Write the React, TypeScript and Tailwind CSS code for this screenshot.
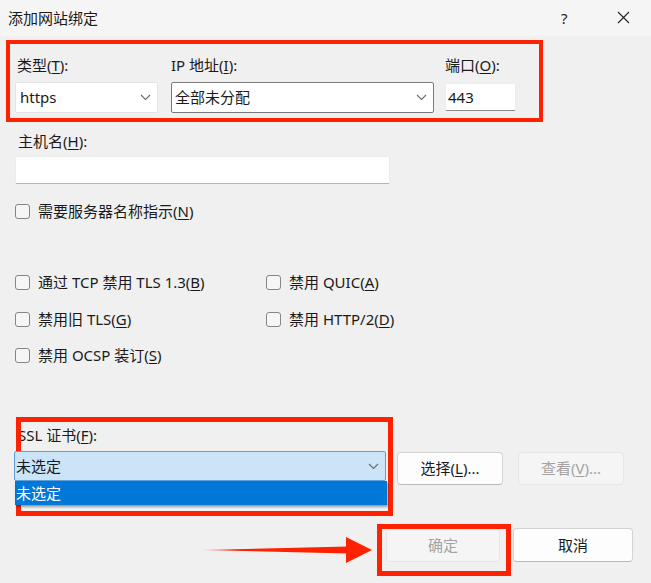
import React from "react";

const FONT = { fontFamily: '"Segoe UI", "Noto Sans", "Noto Sans CJK SC", sans-serif' };

function Chevron({ color = "#6b6b6b" }: { color?: string }) {
  return (
    <svg width="11" height="7" viewBox="0 0 11 7" fill="none">
      <polyline points="1,1 5.5,5.5 10,1" stroke={color} strokeWidth="1.1" />
    </svg>
  );
}

function Key({ k }: { k: string }) {
  return <u className="underline-offset-2 decoration-1">{k}</u>;
}

function Check({ children }: { children: React.ReactNode }) {
  return (
    <div className="flex items-center h-[20px] gap-[8px]">
      <div className="w-[15px] h-[15px] rounded-[3px] border border-[#858585] bg-[#f6f6f6] shrink-0" />
      <span className="text-[15px] text-[#1a1a1a] leading-[20px] whitespace-nowrap">{children}</span>
    </div>
  );
}

export default function App() {
  return (
    <div className="relative w-[651px] h-[583px] bg-[#f0f0f0] overflow-hidden text-[#1a1a1a]" style={FONT}>
      {/* Title bar */}
      <div className="h-[36px] bg-[#f5f5f5] flex items-center pl-[8px] relative">
        <span className="text-[15px] text-[#1a1a1a]">添加网站绑定</span>
        <span className="absolute left-[561px] top-[7px] text-[15px] text-[#222]">?</span>
        <svg className="absolute left-[617px] top-[11px]" width="13" height="13" viewBox="0 0 13 13">
          <path d="M1 1 L12 12 M12 1 L1 12" stroke="#222" strokeWidth="1.1" />
        </svg>
      </div>

      <div className="pl-[15px]">
        {/* Top row */}
        <div className="flex items-start mt-[19px]">
          <div className="w-[143px]">
            <div className="h-[20px] leading-[20px] text-[15px] pl-[2px]">类型(<Key k="T" />):</div>
            <div className="mt-[7px] h-[31px] bg-white border border-[#e3e3e3] rounded-[2px] flex items-center justify-between pl-[4px] pr-[6px]">
              <span className="text-[15px]">https</span>
              <Chevron />
            </div>
          </div>
          <div className="w-[263px] ml-[13px]">
            <div className="h-[20px] leading-[20px] text-[15px]">IP 地址(<Key k="I" />):</div>
            <div className="mt-[7px] h-[31px] bg-white border border-[#7a7a7a] rounded-[2px] flex items-center justify-between pl-[3px] pr-[6px]">
              <span className="text-[15px]">全部未分配</span>
              <Chevron />
            </div>
          </div>
          <div className="w-[71px] ml-[11px]">
            <div className="h-[20px] leading-[20px] text-[15px]">端口(<Key k="O" />):</div>
            <div className="mt-[8px] h-[28px] bg-white border border-[#ececec] border-b-[#8a8a8a] rounded-[2px] flex items-center pl-[2px]">
              <span className="text-[15px]">443</span>
            </div>
          </div>
        </div>

        {/* Host name */}
        <div className="mt-[18px] h-[20px] leading-[20px] text-[15px] pl-[3px]">主机名(<Key k="H" />):</div>
        <div className="mt-[5px] w-[375px] h-[28px] bg-white border border-[#ececec] border-b-[#b5b5b5] rounded-[2px]" />

        <div className="mt-[17px]">
          <Check>需要服务器名称指示(<Key k="N" />)</Check>
        </div>

        {/* Options grid */}
        <div className="mt-[51px] grid grid-cols-[251px_1fr] gap-y-[17px]">
          <Check>通过 TCP 禁用 TLS 1.3(<Key k="B" />)</Check>
          <Check>禁用 QUIC(<Key k="A" />)</Check>
          <Check>禁用旧 TLS(<Key k="G" />)</Check>
          <Check>禁用 HTTP/2(<Key k="D" />)</Check>
          <div className="-mt-[1px]">
            <Check>禁用 OCSP 装订(<Key k="S" />)</Check>
          </div>
        </div>

        {/* SSL */}
        <div className="mt-[60px] h-[20px] leading-[20px] text-[15px] pl-[3px]">SSL 证书(<Key k="F" />):</div>
        <div className="mt-[6px] flex items-start">
          <div className="relative z-10 -ml-[1px] w-[372px]">
            <div className="h-[30px] bg-[#cce4f7] border border-[#5d9fdc] rounded-[2px] flex items-center justify-between pl-[1px] pr-[6px]">
              <span className="text-[15px]">未选定</span>
              <Chevron />
            </div>
            <div className="absolute left-[1px] right-[-1px] top-[30px] h-[24px] bg-[#0078d7] flex items-center pl-[1px] shadow-[1px_2px_2px_rgba(0,0,0,0.35)]">
              <span className="text-[15px] text-white">未选定</span>
            </div>
          </div>
          <button className="ml-[11px] mt-[1px] w-[106px] h-[33px] bg-[#fdfdfd] border border-[#d3d3d3] border-b-[#b9b9b9] rounded-[4px] text-[15px] text-[#1a1a1a]">
            选择(<Key k="L" />)...
          </button>
          <button className="ml-[15px] mt-[1px] w-[106px] h-[33px] bg-[#f5f5f5] border border-[#e6e6e6] rounded-[4px] text-[15px] text-[#a3a3a3]">
            查看(<Key k="V" />)...
          </button>
        </div>
      </div>

      {/* Bottom buttons */}
      <div className="mt-[43px] flex items-center justify-end pr-[18px] gap-[13px]">
        <button className="w-[114px] h-[33px] bg-[#f5f5f5] border border-[#e6e6e6] rounded-[4px] text-[15px] text-[#a3a3a3]">
          确定
        </button>
        <button className="w-[120px] h-[34px] bg-[#fdfdfd] border border-[#d3d3d3] border-b-[#b9b9b9] rounded-[4px] text-[15px] text-[#1a1a1a]">
          取消
        </button>
      </div>

      {/* Red annotation boxes */}
      <div className="absolute left-[6px] top-[40px] w-[537px] h-[82px] border-[4px] border-[#ff2200]" />
      <div className="absolute left-[16px] top-[417px] w-[377px] h-[99px] border-[5px] border-[#ff2200]" />
      <div className="absolute left-[377px] top-[524px] w-[134px] h-[52px] border-[5px] border-[#ff2200]" />

      {/* Arrow */}
      <svg className="absolute left-[195px] top-[534px]" width="182" height="32" viewBox="0 0 182 32">
        <defs>
          <linearGradient id="sh" x1="0" x2="1" y1="0" y2="0">
            <stop offset="0" stopColor="#ff2200" stopOpacity="0.3" />
            <stop offset="0.25" stopColor="#ff2200" stopOpacity="1" />
          </linearGradient>
        </defs>
        <polygon points="5,16 153,12.5 153,19.5" fill="url(#sh)" />
        <polygon points="151,3 177,16 151,29" fill="#ff2200" />
      </svg>
    </div>
  );
}
